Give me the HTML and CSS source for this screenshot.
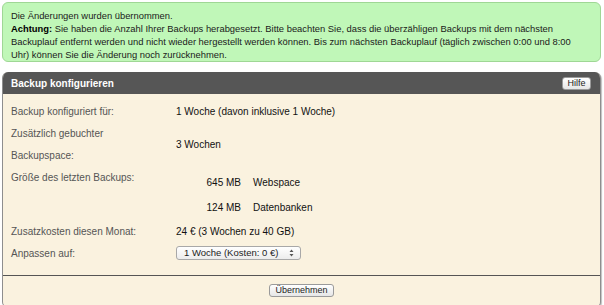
FILE: index.html
```html
<!DOCTYPE html>
<html lang="de">
<head>
<meta charset="utf-8">
<title>Backup konfigurieren</title>
<link rel="stylesheet" href="styles.css">
</head>
<body>
<div class="notice">
  <div class="notice-line">Die Änderungen wurden übernommen.</div>
  <div class="notice-text"><b class="notice-strong">Achtung:</b> Sie haben die Anzahl Ihrer Backups herabgesetzt. Bitte beachten Sie, dass die überzähligen Backups mit dem nächsten<br>Backuplauf entfernt werden und nicht wieder hergestellt werden können. Bis zum nächsten Backuplauf (täglich zwischen 0:00 und 8:00<br>Uhr) können Sie die Änderung noch zurücknehmen.</div>
</div>

<div class="panel">
  <div class="panel-head">
    <span class="panel-title">Backup konfigurieren</span>
    <button class="btn btn-help" type="button">Hilfe</button>
  </div>
  <div class="panel-body">
    <div class="row">
      <div class="label">Backup konfiguriert für:</div>
      <div class="value">1 Woche (davon inklusive 1 Woche)</div>
    </div>
    <div class="row">
      <div class="label">Zusätzlich gebuchter<br>Backupspace:</div>
      <div class="value center">3 Wochen</div>
    </div>
    <div class="row row-sizes">
      <div class="label">Größe des letzten Backups:</div>
      <div class="sizes">
        <span class="num">645 MB</span><span class="name">Webspace</span>
        <span class="num">124 MB</span><span class="name">Datenbanken</span>
      </div>
    </div>
    <div class="row">
      <div class="label">Zusatzkosten diesen Monat:</div>
      <div class="value">24 € (3 Wochen zu 40 GB)</div>
    </div>
    <div class="row">
      <div class="label">Anpassen auf:</div>
      <div class="value center">
        <div class="select-wrap">
          <select class="select">
            <option>1 Woche (Kosten: 0 €)</option>
          </select>
          <svg class="select-arrow" width="5" height="8" viewBox="0 0 5 8"><path d="M2.5 0.5 L4.5 3 L0.5 3 Z M0.5 5 L4.5 5 L2.5 7.5 Z" fill="#555"/></svg>
        </div>
      </div>
    </div>
  </div>
  <div class="panel-foot">
    <button class="btn btn-submit" type="button">Übernehmen</button>
  </div>
</div>
</body>
</html>
```

FILE: styles.css
```css
* { box-sizing: border-box; }

body {
  margin: 0;
  padding: 2px 3px 0 2px;
  background: #ffffff;
  font-family: "Liberation Sans", Arial, sans-serif;
  font-size: 10px;
  color: #111;
}

.notice {
  background: #c0f7b8;
  border: 1px solid #9fd795;
  border-radius: 6px;
  padding: 6px 8px 0 8px;
  height: 60px;
  font-size: 9.4px;
  line-height: 13px;
  color: #1a1a1a;
}

.notice-strong { font-weight: bold; color: #000; }

.panel {
  margin-top: 10px;
  border: 1px solid #8e8e8e;
  border-top: none;
  border-radius: 6px 6px 5px 5px;
  background: #faf2df;
  box-shadow: 1px 1px 1px rgba(0, 0, 0, 0.25);
  overflow: hidden;
}

.panel-head {
  background: #565656;
  height: 22px;
  display: flex;
  align-items: center;
  justify-content: space-between;
  padding: 0 9px 0 8px;
}

.panel-title {
  color: #fff;
  font-weight: bold;
  font-size: 10px;
}

.btn {
  font-family: "Liberation Sans", Arial, sans-serif;
  font-size: 9px;
  color: #222;
  background: linear-gradient(#ffffff, #e6e6e6);
  border: 1px solid #9a9a9a;
  border-radius: 3px;
  padding: 0;
  line-height: 11px;
  height: 13px;
}

.btn-help {
  width: 29px;
  margin-top: 1px;
}

.panel-body {
  padding: 7px 8px 0 8px;
}

.row {
  display: grid;
  grid-template-columns: 165px 1fr;
  line-height: 22px;
}

.label { color: #555; }

.value.center {
  display: flex;
  align-items: center;
}

.row-sizes {
  height: 54px;
}

.sizes {
  display: grid;
  grid-template-columns: 65px auto;
  column-gap: 12px;
  justify-content: start;
  padding-top: 4px;
  line-height: 23px;
}

.sizes .num { text-align: right; }

.select-wrap {
  position: relative;
  width: 125px;
  height: 14px;
  margin-top: -2px;
}

.select {
  appearance: none;
  -webkit-appearance: none;
  display: block;
  width: 125px;
  height: 14px;
  margin: 0;
  padding: 0 18px 0 7px;
  text-align: left;
  text-align-last: left;
  font-family: "Liberation Sans", Arial, sans-serif;
  font-size: 9.5px;
  line-height: 12px;
  color: #222;
  background: linear-gradient(#ffffff, #ececec);
  border: 1px solid #a8a8a8;
  border-radius: 3px;
}

.select-arrow {
  position: absolute;
  right: 7px;
  top: 3px;
  pointer-events: none;
}

.panel-foot {
  margin-top: 10px;
  border-top: 1px solid #555;
  display: flex;
  justify-content: center;
  padding: 8px 0 9px 0;
}

.btn-submit {
  width: 65px;
}
```
